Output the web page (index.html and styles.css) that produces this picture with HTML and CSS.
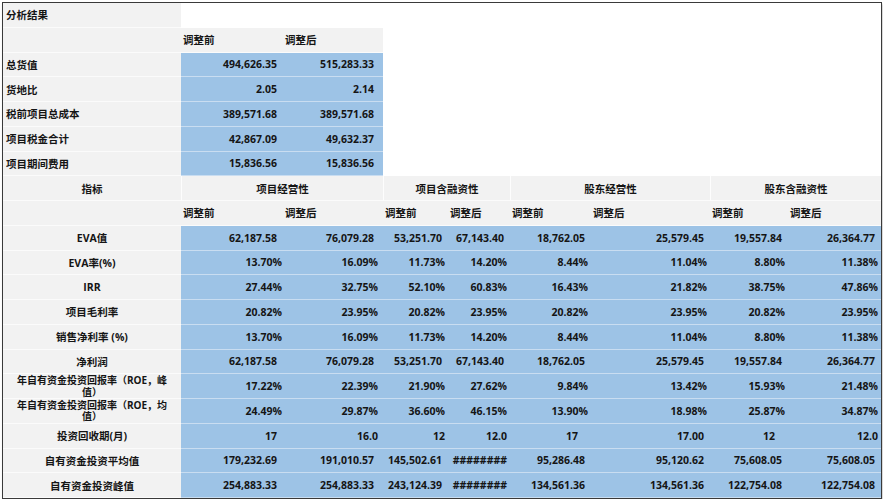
FILE: index.html
```html
<!DOCTYPE html>
<html lang="zh-CN">
<head>
<meta charset="utf-8">
<title>分析结果</title>
<link rel="stylesheet" href="styles.css">
</head>
<body>
<div class="sheet">
  <div class="c lab">分析结果</div>
  <div class="c blank r1"></div>

  <div class="c lab"></div>
  <div class="c hd">调整前</div>
  <div class="c hd">调整后</div>
  <div class="c blank r2"></div>

  <div class="c lab">总货值</div>
  <div class="c v n">494,626.35</div>
  <div class="c v n wide">515,283.33</div>

  <div class="c lab">货地比</div>
  <div class="c v n">2.05</div>
  <div class="c v n wide">2.14</div>

  <div class="c lab">税前项目总成本</div>
  <div class="c v n">389,571.68</div>
  <div class="c v n wide">389,571.68</div>

  <div class="c lab">项目税金合计</div>
  <div class="c v n">42,867.09</div>
  <div class="c v n wide">49,632.37</div>

  <div class="c lab">项目期间费用</div>
  <div class="c v n">15,836.56</div>
  <div class="c v n wide">15,836.56</div>

  <div class="c gh">指标</div>
  <div class="c gh s2 sep">项目经营性</div>
  <div class="c gh s2 sep">项目含融资性</div>
  <div class="c gh s2 sep">股东经营性</div>
  <div class="c gh s2 sep">股东含融资性</div>

  <div class="c lab"></div>
  <div class="c hd">调整前</div>
  <div class="c hd">调整后</div>
  <div class="c hd">调整前</div>
  <div class="c hd">调整后</div>
  <div class="c hd">调整前</div>
  <div class="c hd">调整后</div>
  <div class="c hd">调整前</div>
  <div class="c hd">调整后</div>

  <div class="c lab ctr">EVA值</div>
  <div class="c v n">62,187.58</div>
  <div class="c v n wide">76,079.28</div>
  <div class="c v n">53,251.70</div>
  <div class="c v n">67,143.40</div>
  <div class="c v n">18,762.05</div>
  <div class="c v n">25,579.45</div>
  <div class="c v n">19,557.84</div>
  <div class="c v n">26,364.77</div>

  <div class="c lab ctr">EVA率(%)</div>
  <div class="c v p tight">13.70%</div>
  <div class="c v p wide">16.09%</div>
  <div class="c v p">11.73%</div>
  <div class="c v p">14.20%</div>
  <div class="c v p">8.44%</div>
  <div class="c v p">11.04%</div>
  <div class="c v p">8.80%</div>
  <div class="c v p">11.38%</div>

  <div class="c lab ctr">IRR</div>
  <div class="c v p tight">27.44%</div>
  <div class="c v p wide">32.75%</div>
  <div class="c v p">52.10%</div>
  <div class="c v p">60.83%</div>
  <div class="c v p">16.43%</div>
  <div class="c v p">21.82%</div>
  <div class="c v p">38.75%</div>
  <div class="c v p">47.86%</div>

  <div class="c lab ctr">项目毛利率</div>
  <div class="c v p tight">20.82%</div>
  <div class="c v p wide">23.95%</div>
  <div class="c v p">20.82%</div>
  <div class="c v p">23.95%</div>
  <div class="c v p">20.82%</div>
  <div class="c v p">23.95%</div>
  <div class="c v p">20.82%</div>
  <div class="c v p">23.95%</div>

  <div class="c lab ctr">销售净利率 (%)</div>
  <div class="c v p tight">13.70%</div>
  <div class="c v p wide">16.09%</div>
  <div class="c v p">11.73%</div>
  <div class="c v p">14.20%</div>
  <div class="c v p">8.44%</div>
  <div class="c v p">11.04%</div>
  <div class="c v p">8.80%</div>
  <div class="c v p">11.38%</div>

  <div class="c lab ctr">净利润</div>
  <div class="c v n">62,187.58</div>
  <div class="c v n wide">76,079.28</div>
  <div class="c v n">53,251.70</div>
  <div class="c v n">67,143.40</div>
  <div class="c v n">18,762.05</div>
  <div class="c v n">25,579.45</div>
  <div class="c v n">19,557.84</div>
  <div class="c v n">26,364.77</div>

  <div class="c lab ctr two"><span>年自有资金投资回报率（ROE，峰<br>值）</span></div>
  <div class="c v p tight">17.22%</div>
  <div class="c v p wide">22.39%</div>
  <div class="c v p">21.90%</div>
  <div class="c v p">27.62%</div>
  <div class="c v p">9.84%</div>
  <div class="c v p">13.42%</div>
  <div class="c v p">15.93%</div>
  <div class="c v p">21.48%</div>

  <div class="c lab ctr two"><span>年自有资金投资回报率（ROE，均<br>值）</span></div>
  <div class="c v p tight">24.49%</div>
  <div class="c v p wide">29.87%</div>
  <div class="c v p">36.60%</div>
  <div class="c v p">46.15%</div>
  <div class="c v p">13.90%</div>
  <div class="c v p">18.98%</div>
  <div class="c v p">25.87%</div>
  <div class="c v p">34.87%</div>

  <div class="c lab ctr">投资回收期(月)</div>
  <div class="c v n">17</div>
  <div class="c v p wide">16.0</div>
  <div class="c v p">12</div>
  <div class="c v p">12.0</div>
  <div class="c v far">17</div>
  <div class="c v n">17.00</div>
  <div class="c v far">12</div>
  <div class="c v p">12.0</div>

  <div class="c lab ctr">自有资金投资平均值</div>
  <div class="c v n">179,232.69</div>
  <div class="c v n wide">191,010.57</div>
  <div class="c v n">145,502.61</div>
  <div class="c v p">########</div>
  <div class="c v n">95,286.48</div>
  <div class="c v n">95,120.62</div>
  <div class="c v n">75,608.05</div>
  <div class="c v n">75,608.05</div>

  <div class="c lab ctr">自有资金投资峰值</div>
  <div class="c v n">254,883.33</div>
  <div class="c v n wide">254,883.33</div>
  <div class="c v n">243,124.39</div>
  <div class="c v p">########</div>
  <div class="c v n">134,561.36</div>
  <div class="c v n">134,561.36</div>
  <div class="c v n">122,754.08</div>
  <div class="c v n">122,754.08</div>
</div>
</body>
</html>
```

FILE: styles.css
```css
html, body {
  margin: 0;
  padding: 0;
  background: #ffffff;
}

.sheet {
  margin: 2px 0 0 2px;
  width: 878px;
  border: 1px solid #3a3a3a;
  box-shadow: 1px 2px 2px rgba(0, 0, 0, 0.22);
  display: grid;
  grid-template-columns: 178px 102px 100px 65px 62px 81px 119px 78px 93px;
  grid-template-rows: repeat(20, 24.75px);
  background: #f2f2f2;
  font-family: "Open Sans", "Noto Sans CJK SC", sans-serif;
  font-size: 10.5px;
  font-weight: 700;
  color: #151515;
}

.c {
  display: flex;
  align-items: center;
  overflow: hidden;
  white-space: nowrap;
  box-sizing: border-box;
  min-width: 0;
}

.lab {
  background: #f2f2f2;
  border-bottom: 1px solid #fbfbfb;
  padding-left: 3px;
}

.lab.ctr {
  justify-content: center;
  padding-left: 0;
}

.lab.two {
  font-size: 10px;
}

.lab.two span {
  display: block;
  line-height: 11.5px;
  text-align: center;
  padding-top: 1px;
}

.blank {
  background: #ffffff;
}

.blank.r1 {
  grid-column: 2 / -1;
  grid-row: 1;
}

.blank.r2 {
  grid-column: 4 / -1;
  grid-row: 2 / span 6;
}

.hd {
  background: #f2f2f2;
  border-bottom: 1px solid #fbfbfb;
  padding-left: 2px;
}

.gh {
  background: #f2f2f2;
  border-bottom: 1px solid #fbfbfb;
  justify-content: center;
}

.gh.s2 {
  grid-column: span 2;
}

.gh.sep {
  border-left: 1px solid #fdfdfd;
}

.v {
  background: #9dc3e6;
  border-bottom: 1px solid #c9ddf1;
  justify-content: flex-end;
}

.v.n {
  padding-right: 6px;
}

.v.p {
  padding-right: 3px;
}

.v.far {
  padding-right: 13px;
}

.v.wide.n {
  padding-right: 9px;
}

.v.wide.p {
  padding-right: 5px;
}

.v.tight.p {
  padding-right: 1px;
}
```
